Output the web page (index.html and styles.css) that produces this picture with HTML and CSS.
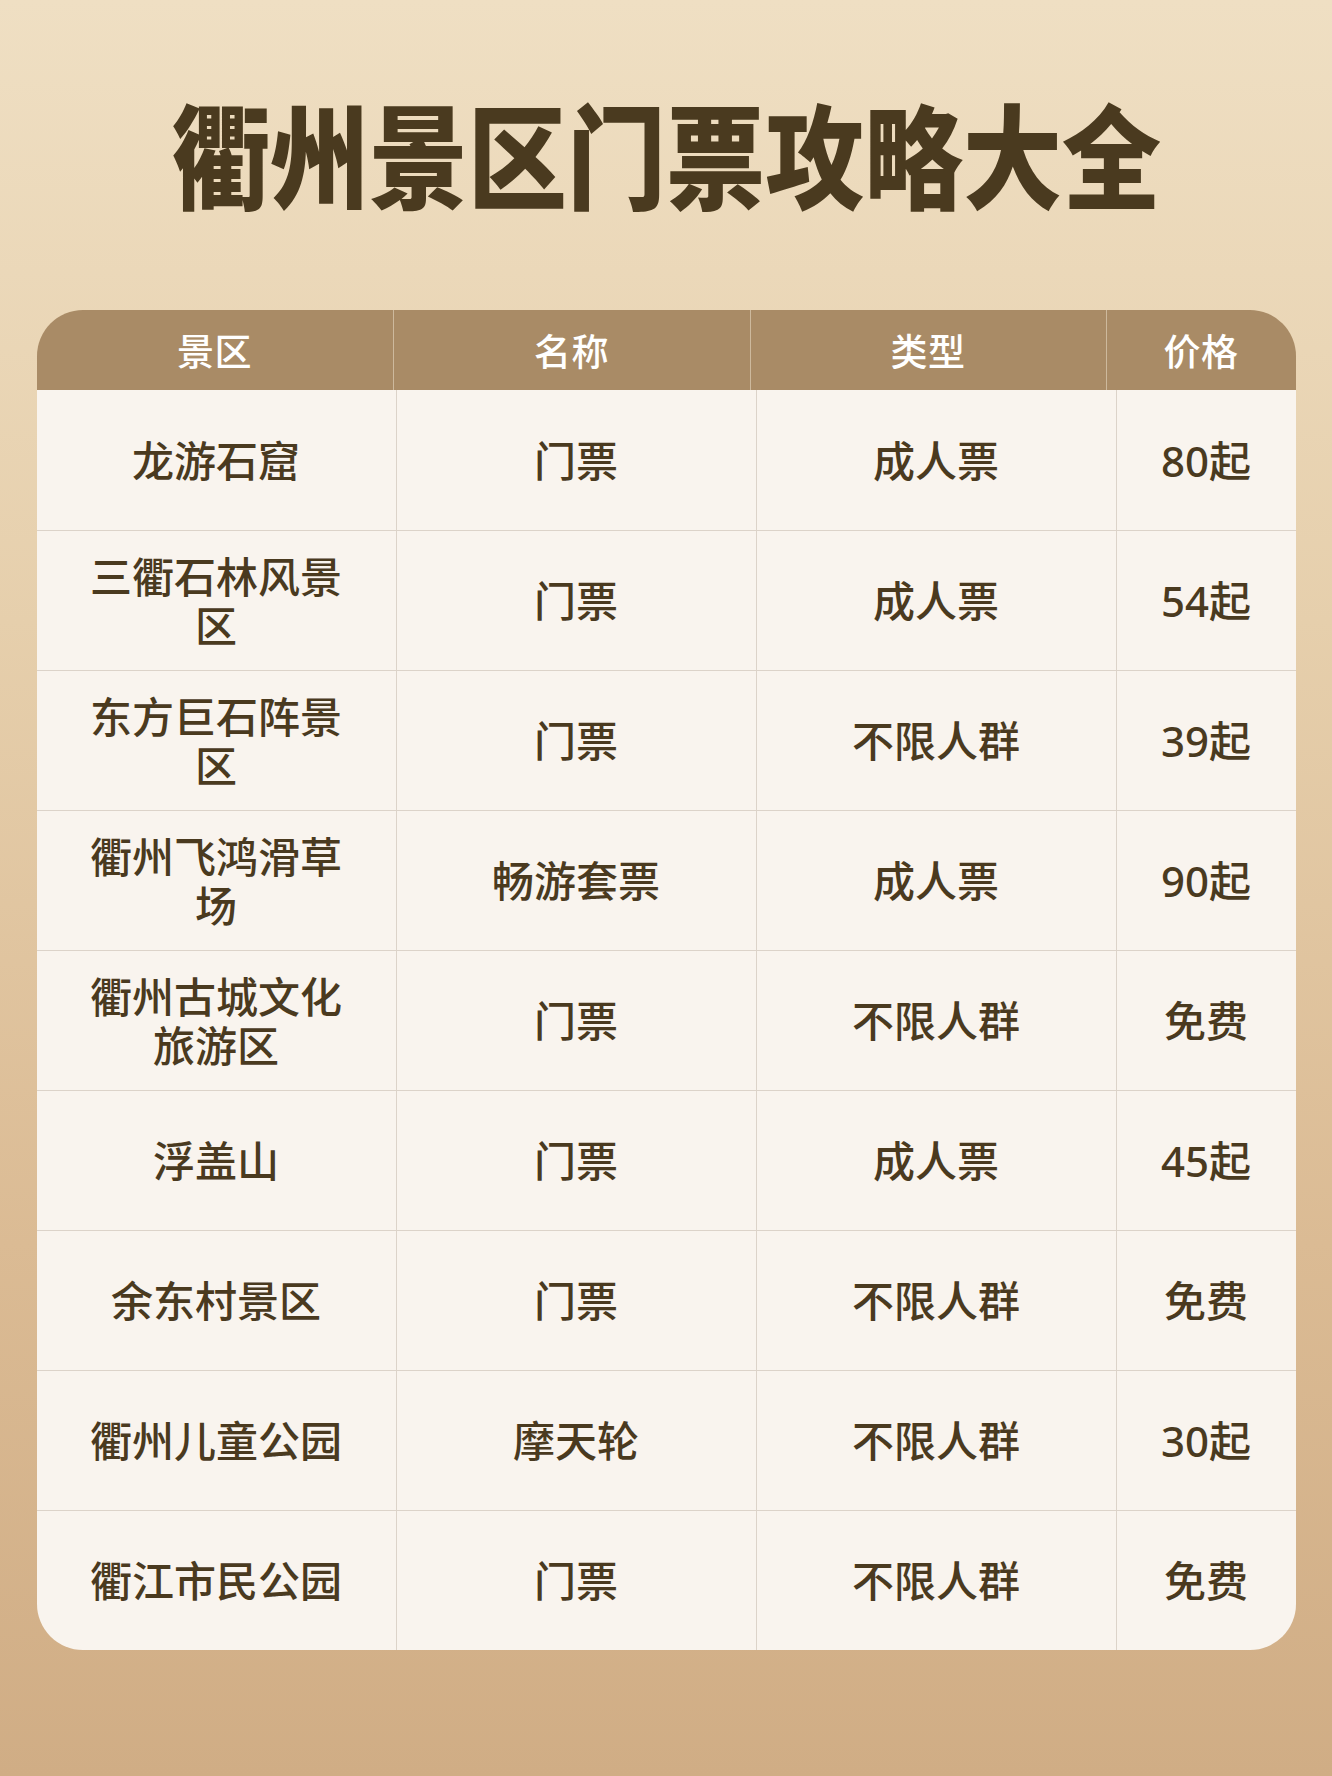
FILE: index.html
```html
<!DOCTYPE html>
<html lang="zh-CN">
<head>
<meta charset="utf-8">
<title>衢州景区门票攻略大全</title>
<link rel="stylesheet" href="styles.css">
</head>
<body>
<div class="page">
  <h1 class="title"><span class="title-text">衢州景区门票攻略大全</span></h1>
  <div class="table">
    <div class="head">
      <div class="hcell">景区</div>
      <div class="hcell">名称</div>
      <div class="hcell">类型</div>
      <div class="hcell">价格</div>
    </div>
    <div class="body">
      <div class="row"><div class="cell">龙游石窟</div><div class="cell">门票</div><div class="cell">成人票</div><div class="cell">80起</div></div>
      <div class="row"><div class="cell">三衢石林风景区</div><div class="cell">门票</div><div class="cell">成人票</div><div class="cell">54起</div></div>
      <div class="row"><div class="cell">东方巨石阵景区</div><div class="cell">门票</div><div class="cell">不限人群</div><div class="cell">39起</div></div>
      <div class="row"><div class="cell">衢州飞鸿滑草场</div><div class="cell">畅游套票</div><div class="cell">成人票</div><div class="cell">90起</div></div>
      <div class="row"><div class="cell">衢州古城文化旅游区</div><div class="cell">门票</div><div class="cell">不限人群</div><div class="cell">免费</div></div>
      <div class="row"><div class="cell">浮盖山</div><div class="cell">门票</div><div class="cell">成人票</div><div class="cell">45起</div></div>
      <div class="row"><div class="cell">余东村景区</div><div class="cell">门票</div><div class="cell">不限人群</div><div class="cell">免费</div></div>
      <div class="row"><div class="cell">衢州儿童公园</div><div class="cell">摩天轮</div><div class="cell">不限人群</div><div class="cell">30起</div></div>
      <div class="row"><div class="cell">衢江市民公园</div><div class="cell">门票</div><div class="cell">不限人群</div><div class="cell">免费</div></div>
    </div>
  </div>
</div>
</body>
</html>
```

FILE: styles.css
```css
html, body {
  margin: 0;
  padding: 0;
}
body {
  width: 1332px;
  height: 1776px;
  background: linear-gradient(180deg, #efdfc3 0%, #e6cfac 35%, #dbbb94 70%, #d0ad85 100%);
  font-family: "Noto Sans", "Noto Sans CJK SC", sans-serif;
  color: #4a3a1f;
}
.page {
  display: flex;
  flex-direction: column;
  align-items: center;
  padding-top: 102px;
}
.title {
  margin: 0;
  font-family: "Noto Sans CJK SC", sans-serif;
  font-size: 99px;
  line-height: 99px;
  font-weight: 900;
  color: #4a3a1f;
  letter-spacing: 0;
  white-space: nowrap;
}
.title-text {
  display: inline-block;
  transform: scaleY(1.14);
}
.table {
  margin-top: 109px;
  width: 1259px;
}
.head {
  display: grid;
  grid-template-columns: 356px 357px 356px 190px;
  height: 80px;
  background: #a98b66;
  border-radius: 46px 46px 0 0;
  overflow: hidden;
}
.hcell {
  display: flex;
  align-items: center;
  justify-content: center;
  color: #ffffff;
  font-size: 37px;
  font-weight: 500;
  letter-spacing: 0.5px;
}
.hcell + .hcell {
  border-left: 1px solid #cdb99d;
}
.body {
  background: #f9f4ee;
  border-radius: 0 0 46px 46px;
  overflow: hidden;
}
.row {
  display: grid;
  grid-template-columns: 359px 360px 360px 180px;
  height: 140px;
  box-sizing: border-box;
}
.row + .row {
  border-top: 1px solid #dcd3c9;
}
.cell {
  display: flex;
  align-items: center;
  justify-content: center;
  text-align: center;
  padding: 0 40px;
  font-size: 42px;
  line-height: 49px;
  font-weight: 500;
  color: #4a3a1f;
}
.cell + .cell {
  border-left: 1px solid #dcd3c9;
}
.cell:last-child {
  padding: 0 10px;
}
```
